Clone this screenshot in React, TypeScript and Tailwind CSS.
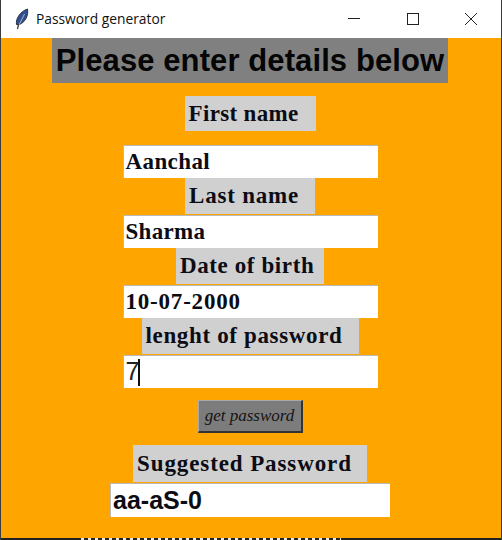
const SERIF = "font-['Liberation_Serif',serif]";
const ARIAL = "font-['Liberation_Sans',Arial,sans-serif]";

function Label({ text, className }: { text: string; className: string }) {
  return (
    <div className={`flex items-center bg-[#d0d0d0] pt-[1px] pl-[4px] text-[23px] font-bold text-[#0c0c14] ${SERIF} ${className}`}>
      {text}
    </div>
  );
}

function Entry({ value, className = "" }: { value: string; className?: string }) {
  return (
    <div className={`flex h-[33px] w-[255px] items-center border-t border-l border-[#b9b9b9] bg-white pl-[2px] text-[23px] font-bold text-[#0c0c14] ${SERIF} ${className}`}>
      {value}
    </div>
  );
}

export default function App() {
  return (
    <div className="h-[540px] w-[502px] overflow-hidden border-x border-[#3c3c3c] bg-white">
      {/* title bar */}
      <div className="flex h-[38px] items-center bg-white">
        <svg width="14" height="22" viewBox="0 0 14 22" className="ml-[14px]">
          <path d="M1.5 16.5C0.5 11 5 3.5 12.5 1c1 6-1.5 12.5-8 15.5z" fill="#34508c" stroke="#16233f" strokeWidth="0.9" />
          <path d="M3 19 L9.5 6" stroke="#a9bbdc" strokeWidth="0.9" fill="none" />
          <path d="M2.5 21 L3.6 16" stroke="#444" strokeWidth="1.3" fill="none" />
        </svg>
        <span className="ml-[7px] text-[13.8px] text-[#111] font-['Open_Sans',sans-serif]">Password generator</span>
        <div className="ml-auto flex items-center">
          <svg width="14" height="14" viewBox="0 0 14 14" className="mr-[46px]">
            <path d="M1 6.5H13" stroke="#222" strokeWidth="1" />
          </svg>
          <svg width="12" height="12" viewBox="0 0 12 12" className="mr-[45px]">
            <rect x="0.5" y="0.5" width="11" height="11" fill="none" stroke="#222" strokeWidth="1" />
          </svg>
          <svg width="14" height="14" viewBox="0 0 14 14" className="mr-[23px]">
            <path d="M1 1L13 13M13 1L1 13" stroke="#222" strokeWidth="1" />
          </svg>
        </div>
      </div>

      {/* form */}
      <div className="flex h-[500px] flex-col items-center bg-[#ffa500] pr-[2px]">
        <div className={`flex h-[45px] w-[396px] items-center justify-center bg-[#808080] pt-[1px] text-[31px] font-bold tracking-[0.1px] text-[#050505] ${ARIAL}`}>
          Please enter details below
        </div>
        <Label text="First name" className="mt-[13px] h-[35px] w-[131px] tracking-[0.35px]" />
        <Entry value="Aanchal" className="mt-[14px] tracking-[0.4px]" />
        <Label text="Last name" className="h-[36px] w-[130px] tracking-[0.8px]" />
        <Entry value="Sharma" className="mt-[1px] tracking-[0.3px]" />
        <Label text="Date of birth" className="h-[36px] w-[148px] tracking-[0.6px]" />
        <Entry value="10-07-2000" className="mt-[1px] tracking-[0.8px]" />
        <Label text="lenght of password" className="h-[36px] w-[217px] tracking-[0.65px]" />
        <div className={`mt-[1px] flex h-[33px] w-[255px] items-center border-t border-l border-[#b9b9b9] bg-white pl-[2px] text-[25px] text-[#222] ${ARIAL}`}>
          7<span className="-ml-[1px] h-[27px] w-[2px] bg-[#111]" />
        </div>
        <div className={`mt-[12px] flex h-[33px] w-[105px] items-center justify-center border-t border-l border-t-[#a8a8a8] border-l-[#a8a8a8] border-r-2 border-b-2 border-r-[#333] border-b-[#333] bg-[#7c7c7c] text-[17px] italic text-[#141414] ${SERIF}`}>
          get password
        </div>
        <Label text="Suggested Password" className="mt-[12px] h-[37px] w-[234px] tracking-[0.9px]" />
        <div className={`mt-[1px] flex h-[34px] w-[280px] items-center border-t border-l border-[#b9b9b9] bg-white pl-[2px] text-[25px] font-bold text-[#0c0c14] ${ARIAL}`}>
          aa-aS-0
        </div>
      </div>

      {/* what shows below the window */}
      <div className="h-[2px] bg-[#222]">
        <div className="ml-[80px] h-[2px] w-[260px] bg-[repeating-linear-gradient(90deg,#e8e8e8_0,#e8e8e8_3px,#222_3px,#222_7px)]" />
      </div>
    </div>
  );
}
